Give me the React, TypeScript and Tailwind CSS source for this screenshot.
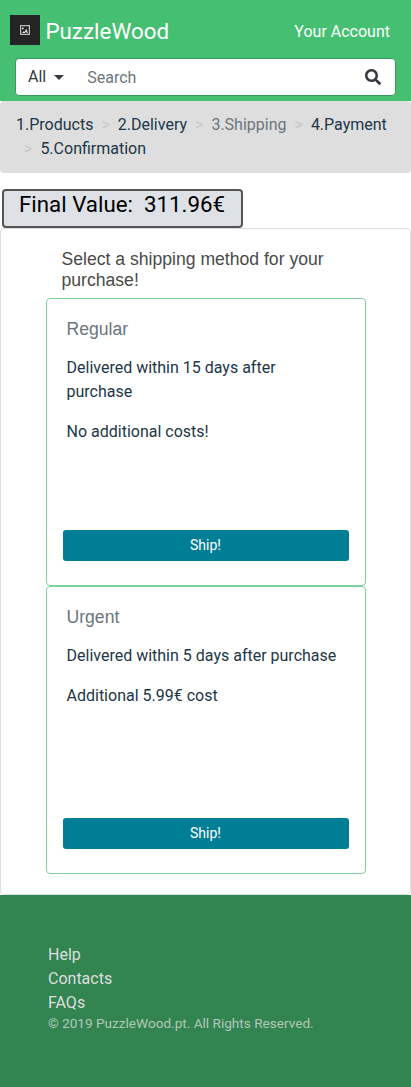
import { FaSearch } from "react-icons/fa";

const steps = [
  { label: "1.Products" },
  { label: "2.Delivery" },
  { label: "3.Shipping", active: true },
  { label: "4.Payment" },
  { label: "5.Confirmation" },
];

const methods = [
  { name: "Regular", lines: ["Delivered within 15 days after purchase", "No additional costs!"] },
  { name: "Urgent", lines: ["Delivered within 5 days after purchase", "Additional 5.99€ cost"] },
];

function Logo() {
  return (
    <span className="flex h-[30px] w-[30px] items-center justify-center bg-[#242424]">
      <svg width="10" height="10" viewBox="0 0 10 10" fill="none" aria-hidden="true">
        <rect x="0.6" y="0.6" width="8.8" height="8.8" stroke="#c0c0c0" strokeWidth="1.2" />
        <path d="M2 8 L3.6 6.2 L4.6 7 L6.2 3.8 L8 8 L6.9 8 L6.1 6.6 L5 8 Z" fill="#ededed" />
        <rect x="2" y="2.6" width="1.6" height="1.6" fill="#ededed" />
      </svg>
    </span>
  );
}

function Header() {
  return (
    <header className="h-[101px] bg-[#45bf71]">
      <div className="flex h-[58px] items-center justify-between pt-[2px] pr-[21px] pl-[10px]">
        <a className="flex items-center gap-[5.4px] text-[22.4px] leading-6 text-white">
          <Logo />
          <span className="pt-[2px]">PuzzleWood</span>
        </a>
        <a className="pt-[3px] text-base text-white">Your Account</a>
      </div>
      <div className="mr-[15px] ml-[15px] flex h-[38px] items-center rounded border border-[#37995a] bg-white pr-[14px] pl-3">
        <button className="flex items-center text-base text-[#343a40]">
          All
          <span className="ml-2 border-x-[5px] border-t-[5px] border-x-transparent border-t-[#343a40]" />
        </button>
        <input
          placeholder="Search"
          className="mt-[2px] ml-[23px] min-w-0 flex-1 bg-transparent text-base outline-none placeholder:text-[#6c757d]"
        />
        <FaSearch size={16} color="#343a40" />
      </div>
    </header>
  );
}

function Steps() {
  return (
    <nav>
      <ol className="mb-4 flex h-[72px] flex-wrap content-start rounded bg-[#dedede] px-4 py-3">
        {steps.map((step, i) => (
          <li key={step.label} className={step.active ? "flex text-[#6c757d]" : "flex text-[#1d3648]"}>
            {i > 0 && <span className="px-2 text-[#c6c8ca]">&gt;</span>}
            {step.label}
          </li>
        ))}
      </ol>
    </nav>
  );
}

function MethodCard({ name, lines }: { name: string; lines: string[] }) {
  return (
    <section className="flex h-72 flex-col rounded border border-[#7dd39b] bg-white px-4 pt-5 pb-6">
      <div className="flex-1 px-1">
        <h3 className="mb-4 font-['Liberation_Sans',sans-serif] text-[17.6px] leading-[21px] text-[#6c757d]">{name}</h3>
        {lines.map((line) => (
          <p key={line} className="mb-4 text-[#1d3648]">
            {line}
          </p>
        ))}
      </div>
      <button className="h-[31px] rounded-[3px] bg-[#007e95] pb-[2px] text-sm text-white">Ship!</button>
    </section>
  );
}

function Footer() {
  return (
    <footer className="h-[192px] bg-[#328551] px-12 pt-12 text-[#dedede]">
      <ul>
        <li>Help</li>
        <li>Contacts</li>
        <li>FAQs</li>
      </ul>
      <p className="text-[13.6px] leading-4 text-[#b2c6b9]">© 2019 PuzzleWood.pt. All Rights Reserved.</p>
    </footer>
  );
}

export default function App() {
  return (
    <div className="min-h-[1087px] bg-white font-[Roboto,sans-serif] text-base leading-6">
      <Header />
      <Steps />
      <div className="ml-[2px] h-[39px] w-[241px] rounded border-2 border-[#555555] bg-[#dee2e6] pl-[15px] text-[22.3px] leading-[27px] whitespace-pre text-black">
        Final Value:  311.96€
      </div>
      <main className="h-[667px] rounded border border-[#dedede] px-[44.5px] pt-5">
        <h2 className="mb-[7px] px-4 font-['Liberation_Sans',sans-serif] text-[17.6px] leading-[21px] text-[#4a4a4a]">
          Select a shipping method for your purchase!
        </h2>
        {methods.map((method) => (
          <MethodCard key={method.name} {...method} />
        ))}
      </main>
      <Footer />
    </div>
  );
}
